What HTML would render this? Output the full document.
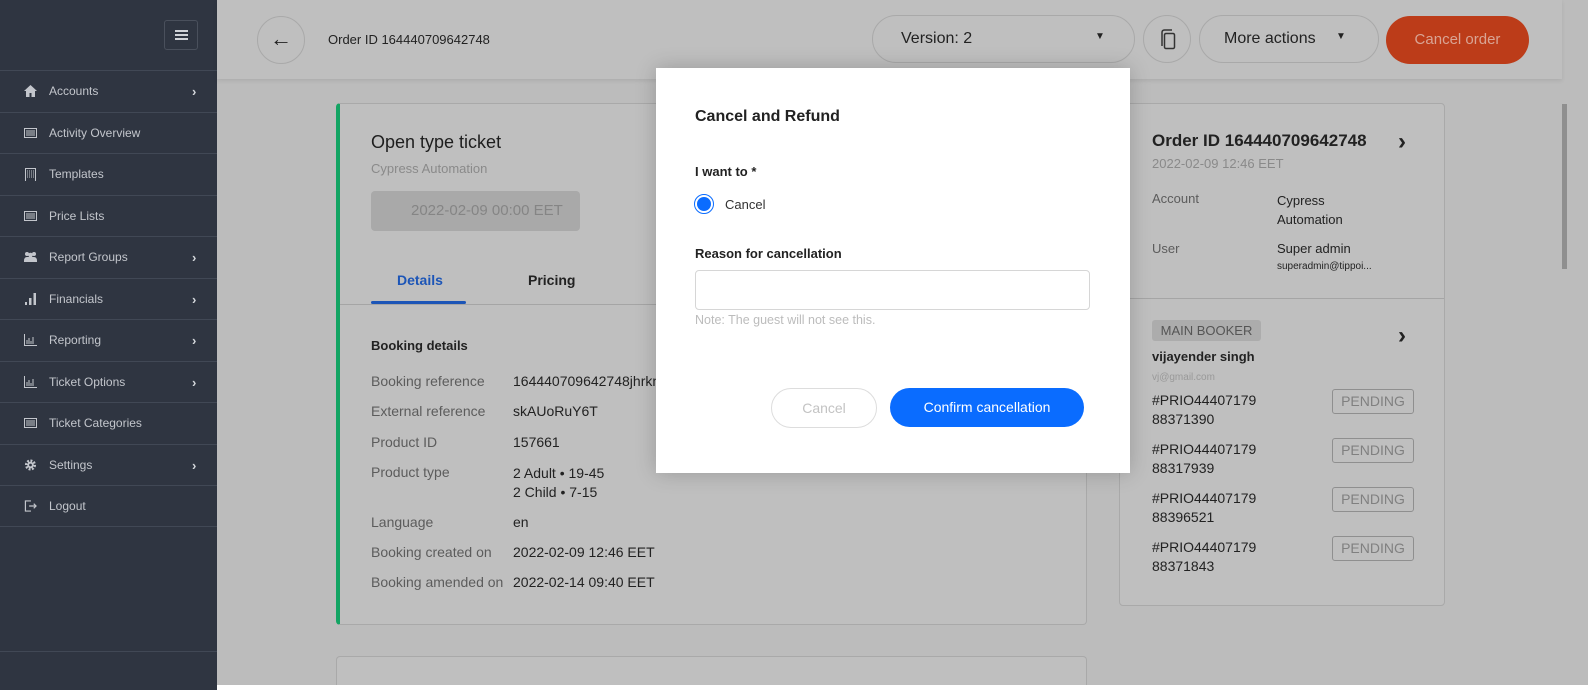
<!DOCTYPE html>
<html style="width:1588px;height:690px;overflow:hidden"><head><meta charset="utf-8"><style>
*{box-sizing:border-box;margin:0;padding:0}
body{width:1588px;height:690px;overflow:hidden;background:#fff;font-family:"Liberation Sans",sans-serif;position:relative}
.a{position:absolute}
#side{left:0;top:0;width:217px;height:690px;background:#2f3541}
.hb{left:164px;top:20px;width:34px;height:30px;border:1px solid #4a505c;border-radius:3px}
.hb i{position:absolute;left:10px;width:13px;height:2px;background:#d0d3d8}
.mi{left:0;width:217px;height:41.5px;border-top:1px solid #414855;color:#c3c6cc;font-size:12px;line-height:41px;padding-left:49px}
.mi .ic{position:absolute;left:24px;top:14px;width:13px;height:12px;color:#c3c6cc}
.mi .ch{position:absolute;left:192px;top:0;font-size:13px;font-weight:bold;color:#d5d8dc}
#main{left:217px;top:0;width:1371px;height:685px;background:#bcbcbc;overflow:hidden}
#top{left:217px;top:0;width:1345px;height:79px;background:#bfbfbf;box-shadow:0 2px 4px rgba(0,0,0,.08)}
.pill{border:1px solid #a9a9a9;border-radius:24px;height:48px;top:15px}
.card{background:#bfbfbf;border:1px solid #a9a9a9;border-radius:4px}
.lbl{color:#5c5c5c;font-size:14px}
.val{color:#222;font-size:14px}
.pend{left:212px;width:82px;height:25px;border:1px solid #8f8f8f;border-radius:3px;color:#808080;font-size:14px;text-align:center;line-height:23px}
#modal{left:656px;top:68px;width:474px;height:405px;background:#fff;box-shadow:0 0 20px rgba(0,0,0,.2)}
</style></head><body>
<div class="a" id="main"></div>
<div class="a" id="side">
 <div class="a hb"><i style="top:9px"></i><i style="top:13px"></i><i style="top:17px"></i></div>
 <div class="a mi" style="top:70px"><svg class="ic" viewBox="0 0 13 12"><path d="M6.5 0L0 6h2v6h3.5V8h2v4H11V6h2z" fill="currentColor"/></svg>Accounts<span class="ch">›</span></div>
 <div class="a mi" style="top:112px"><svg class="ic" viewBox="0 0 13 12"><rect x=".5" y="1.5" width="12" height="9" fill="none" stroke="currentColor"/><path d="M2 4h9M2 6h9M2 8h9" stroke="currentColor"/></svg>Activity Overview</div>
 <div class="a mi" style="top:153px"><svg class="ic" viewBox="0 0 13 12" style="top:13px;height:14px"><rect x="1.5" y=".5" width="10" height="13" fill="none" stroke="currentColor"/><path d="M3 3h7M3 5h7M3 7h7M3 9h7" stroke="currentColor" stroke-dasharray="1 1"/></svg>Templates</div>
 <div class="a mi" style="top:195px"><svg class="ic" viewBox="0 0 13 12"><rect x=".5" y="1.5" width="12" height="9" fill="none" stroke="currentColor"/><path d="M2 4h9M2 6h9M2 8h9" stroke="currentColor"/></svg>Price Lists</div>
 <div class="a mi" style="top:236px"><svg class="ic" viewBox="0 0 13 12"><circle cx="3" cy="3" r="2" fill="currentColor"/><circle cx="10" cy="3" r="2" fill="currentColor"/><circle cx="6.5" cy="4" r="2.3" fill="currentColor"/><path d="M0 10q0-4 3-4h7q3 0 3 4v1H0z" fill="currentColor"/></svg>Report Groups<span class="ch">›</span></div>
 <div class="a mi" style="top:278px"><svg class="ic" viewBox="0 0 13 12"><rect x="1" y="9" width="2" height="3" fill="currentColor"/><rect x="5" y="5" width="2.5" height="7" fill="currentColor"/><rect x="9.5" y="0" width="2.5" height="12" fill="currentColor"/></svg>Financials<span class="ch">›</span></div>
 <div class="a mi" style="top:319px"><svg class="ic" viewBox="0 0 13 12"><path d="M.5 0v11.5H13M3 10V6M5 10V4M7 10V7M9 10V3" stroke="currentColor" fill="none"/></svg>Reporting<span class="ch">›</span></div>
 <div class="a mi" style="top:361px"><svg class="ic" viewBox="0 0 13 12"><path d="M.5 0v11.5H13M3 10V6M5 10V4M7 10V7M9 10V3" stroke="currentColor" fill="none"/></svg>Ticket Options<span class="ch">›</span></div>
 <div class="a mi" style="top:402px"><svg class="ic" viewBox="0 0 13 12"><rect x=".5" y="1.5" width="12" height="9" fill="none" stroke="currentColor"/><path d="M2 4h9M2 6h9M2 8h9" stroke="currentColor"/></svg>Ticket Categories</div>
 <div class="a mi" style="top:444px"><svg class="ic" viewBox="0 0 13 13"><circle cx="6.5" cy="6.5" r="4.5" fill="none" stroke="currentColor" stroke-width="3" stroke-dasharray="2 1.5"/><circle cx="6.5" cy="6.5" r="3.5" fill="currentColor"/><circle cx="6.5" cy="6.5" r="1.5" fill="#2f3541"/></svg>Settings<span class="ch">›</span></div>
 <div class="a mi" style="top:485px;border-bottom:1px solid #414855"><svg class="ic" viewBox="0 0 13 13"><path d="M7 1H1v11h6M5 6.5h7M10 4l2.5 2.5L10 9" stroke="currentColor" fill="none" stroke-width="1.3"/></svg>Logout</div>
 <div class="a" style="left:0;top:651px;width:217px;height:1px;background:#414855"></div>
</div>
<div class="a" id="top"></div>
<div class="a" style="left:257px;top:16px;width:48px;height:48px;border:1px solid #a9a9a9;border-radius:50%;font-size:22px;text-align:center;line-height:44px;color:#222">←</div>
<div class="a" style="left:328px;top:32px;font-size:13px;color:#222">Order ID 164440709642748</div>
<div class="a pill" style="left:872px;width:263px"><span class="a" style="left:28px;top:14px;font-size:16px;color:#222">Version: 2</span><span class="a" style="left:222px;top:15px;font-size:10px;color:#222">▼</span></div>
<div class="a pill" style="left:1143px;width:48px;border-radius:50%"><svg class="a" style="left:15px;top:13px" width="18" height="22" viewBox="0 0 18 22"><path d="M3 17V3.5Q3 1 5.5 1H13" fill="none" stroke="#333" stroke-width="1.5"/><rect x="5.5" y="4.5" width="10" height="15" rx="1.5" fill="none" stroke="#333" stroke-width="1.5"/></svg></div>
<div class="a pill" style="left:1199px;width:180px"><span class="a" style="left:24px;top:14px;font-size:16px;color:#222">More actions</span><span class="a" style="left:136px;top:15px;font-size:10px;color:#222">▼</span></div>
<div class="a" style="left:1386px;top:16px;width:143px;height:48px;border-radius:24px;background:#bc3c19;color:#d9a494;font-size:15px;text-align:center;line-height:47px">Cancel order</div>
<div class="a" style="left:1562px;top:104px;width:5px;height:165px;background:#8f8f8f"></div>

<div class="a card" style="left:336px;top:103px;width:751px;height:522px;border-left:4px solid #13a463">
 <div class="a" style="left:31px;top:28px;font-size:18px;color:#1e1e1e">Open type ticket</div>
 <div class="a" style="left:31px;top:57px;font-size:13px;color:#8a8a8a">Cypress Automation</div>
 <div class="a" style="left:31px;top:87px;width:209px;height:40px;background:#a9a9a9;border-radius:4px;font-size:15px;color:#858585;line-height:40px;padding-left:40px">2022-02-09 00:00 EET</div>
 <div class="a" style="left:57px;top:168px;font-size:14px;font-weight:bold;color:#1c55b7">Details</div>
 <div class="a" style="left:31px;top:197px;width:95px;height:3px;background:#1c55b7;border-radius:2px"></div>
 <div class="a" style="left:188px;top:168px;font-size:14px;font-weight:bold;color:#222">Pricing</div>
 <div class="a" style="left:0;top:200px;width:747px;height:1px;background:#a5a5a5"></div>
 <div class="a" style="left:31px;top:234px;font-size:13px;font-weight:bold;color:#222">Booking details</div>
 <div class="a lbl" style="left:31px;top:269px">Booking reference</div><div class="a val" style="left:173px;top:269px">164440709642748jhrkm</div>
 <div class="a lbl" style="left:31px;top:299px">External reference</div><div class="a val" style="left:173px;top:299px">skAUoRuY6T</div>
 <div class="a lbl" style="left:31px;top:330px">Product ID</div><div class="a val" style="left:173px;top:330px">157661</div>
 <div class="a lbl" style="left:31px;top:360px">Product type</div><div class="a val" style="left:173px;top:360px;line-height:19px">2 Adult • 19-45<br>2 Child • 7-15</div>
 <div class="a lbl" style="left:31px;top:410px">Language</div><div class="a val" style="left:173px;top:410px">en</div>
 <div class="a lbl" style="left:31px;top:440px">Booking created on</div><div class="a val" style="left:173px;top:440px">2022-02-09 12:46 EET</div>
 <div class="a lbl" style="left:31px;top:470px">Booking amended on</div><div class="a val" style="left:173px;top:470px">2022-02-14 09:40 EET</div>
</div>
<div class="a card" style="left:336px;top:656px;width:751px;height:29px;border-bottom:none;border-radius:4px 4px 0 0"></div>

<div class="a card" style="left:1119px;top:103px;width:326px;height:503px">
 <div class="a" style="left:32px;top:27px;font-size:17px;font-weight:bold;color:#222">Order ID 164440709642748</div>
 <div class="a" style="left:278px;top:24px;font-size:24px;font-weight:bold;color:#222">›</div>
 <div class="a" style="left:32px;top:52px;font-size:13px;color:#8a8a8a">2022-02-09 12:46 EET</div>
 <div class="a lbl" style="left:32px;top:87px;font-size:13px">Account</div><div class="a val" style="left:157px;top:87px;font-size:13px;line-height:19px">Cypress<br>Automation</div>
 <div class="a lbl" style="left:32px;top:137px;font-size:13px">User</div><div class="a val" style="left:157px;top:137px;font-size:13px">Super admin</div>
 <div class="a val" style="left:157px;top:157px;font-size:10px">superadmin@tippoi...</div>
 <div class="a" style="left:0;top:194px;width:324px;height:1px;background:#a5a5a5"></div>
 <div class="a" style="left:32px;top:216px;width:109px;height:21px;background:#acacac;border-radius:3px;font-size:13px;color:#555;text-align:center;line-height:21px">MAIN BOOKER</div>
 <div class="a" style="left:278px;top:218px;font-size:24px;font-weight:bold;color:#222">›</div>
 <div class="a" style="left:32px;top:245px;font-size:13px;font-weight:bold;color:#222">vijayender singh</div>
 <div class="a" style="left:32px;top:268px;font-size:10px;color:#999">vj@gmail.com</div>
 <div class="a val" style="left:32px;top:287px;line-height:19px">#PRIO44407179<br>88371390</div><div class="a pend" style="top:285px">PENDING</div>
 <div class="a val" style="left:32px;top:336px;line-height:19px">#PRIO44407179<br>88317939</div><div class="a pend" style="top:334px">PENDING</div>
 <div class="a val" style="left:32px;top:385px;line-height:19px">#PRIO44407179<br>88396521</div><div class="a pend" style="top:383px">PENDING</div>
 <div class="a val" style="left:32px;top:434px;line-height:19px">#PRIO44407179<br>88371843</div><div class="a pend" style="top:432px">PENDING</div>
</div>

<div class="a" id="modal">
 <div class="a" style="left:39px;top:40px;font-size:16px;font-weight:bold;color:#222">Cancel and Refund</div>
 <div class="a" style="left:39px;top:96px;font-size:13px;font-weight:bold;color:#222">I want to *</div>
 <div class="a" style="left:38px;top:126px;width:20px;height:20px;border-radius:50%;border:1.5px solid #0a6cff;padding:2px"><div style="width:100%;height:100%;border-radius:50%;background:#0a6cff"></div></div>
 <div class="a" style="left:69px;top:129px;font-size:13px;color:#333">Cancel</div>
 <div class="a" style="left:39px;top:178px;font-size:13px;font-weight:bold;color:#222">Reason for cancellation</div>
 <div class="a" style="left:39px;top:202px;width:395px;height:40px;border:1px solid #d6d6d6;border-radius:4px"></div>
 <div class="a" style="left:39px;top:245px;font-size:12.5px;color:#bcbcbc">Note: The guest will not see this.</div>
 <div class="a" style="left:115px;top:320px;width:106px;height:40px;border:1px solid #ddd;border-radius:20px;color:#c3c3c3;font-size:14px;text-align:center;line-height:38px">Cancel</div>
 <div class="a" style="left:234px;top:320px;width:194px;height:39px;background:#0a6cff;border-radius:20px;color:#fff;font-size:14px;text-align:center;line-height:39px">Confirm cancellation</div>
</div>
</body></html>
